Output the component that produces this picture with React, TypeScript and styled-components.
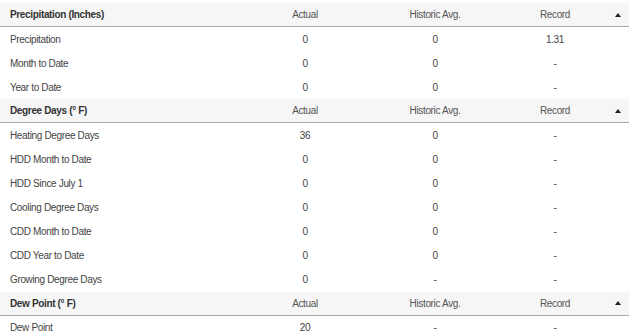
import styled, { createGlobalStyle } from "styled-components";

type Row = { label: string; actual: string; avg: string; record: string };
type Section = { title: string; rows: Row[] };

const sections: Section[] = [
	{
		title: "Precipitation (Inches)",
		rows: [
			{ label: "Precipitation", actual: "0", avg: "0", record: "1.31" },
			{ label: "Month to Date", actual: "0", avg: "0", record: "-" },
			{ label: "Year to Date", actual: "0", avg: "0", record: "-" },
		],
	},
	{
		title: "Degree Days (° F)",
		rows: [
			{ label: "Heating Degree Days", actual: "36", avg: "0", record: "-" },
			{ label: "HDD Month to Date", actual: "0", avg: "0", record: "-" },
			{ label: "HDD Since July 1", actual: "0", avg: "0", record: "-" },
			{ label: "Cooling Degree Days", actual: "0", avg: "0", record: "-" },
			{ label: "CDD Month to Date", actual: "0", avg: "0", record: "-" },
			{ label: "CDD Year to Date", actual: "0", avg: "0", record: "-" },
			{ label: "Growing Degree Days", actual: "0", avg: "-", record: "-" },
		],
	},
	{
		title: "Dew Point (° F)",
		rows: [{ label: "Dew Point", actual: "20", avg: "-", record: "-" }],
	},
];

const GlobalStyle = createGlobalStyle`
	body {
		margin: 0;
		background: #ffffff;
		font-family: "Liberation Sans", Arial, sans-serif;
		overflow: hidden;
	}
`;

const App = () => {
	return (
		<>
			<GlobalStyle />
			<StyledWrapper>
				{sections.map((section) => (
					<StyledSection key={section.title}>
						<StyledHeaderRow>
							<StyledTitle>{section.title}</StyledTitle>
							<StyledHeadCell>Actual</StyledHeadCell>
							<StyledHeadCell>Historic Avg.</StyledHeadCell>
							<StyledHeadCell>Record</StyledHeadCell>
							<StyledToggle>
								<StyledCaret />
							</StyledToggle>
						</StyledHeaderRow>
						{section.rows.map((row) => (
							<StyledRow key={row.label}>
								<StyledLabel>{row.label}</StyledLabel>
								<StyledValue>{row.actual}</StyledValue>
								<StyledValue>{row.avg}</StyledValue>
								<StyledValue>{row.record}</StyledValue>
								<span />
							</StyledRow>
						))}
					</StyledSection>
				))}
			</StyledWrapper>
		</>
	);
};

export default App;

const columns = "240px 130px 130px 110px 19px";

const StyledWrapper = styled.div`
	width: 629px;
	padding-top: 3px;
`;

const StyledSection = styled.section`
	display: flex;
	flex-direction: column;
`;

const StyledHeaderRow = styled.div`
	display: grid;
	grid-template-columns: ${columns};
	align-items: center;
	height: 23px;
	background: #f6f6f6;
	border-bottom: 1px solid #a9a9a9;
	font-size: 10px;
	letter-spacing: -0.35px;
`;

const StyledTitle = styled.div`
	padding-left: 10px;
	font-weight: bold;
	color: #333333;
`;

const StyledHeadCell = styled.div`
	text-align: center;
	color: #555555;
`;

const StyledToggle = styled.div`
	display: flex;
	justify-content: center;
	align-items: center;
`;

const StyledCaret = styled.span`
	width: 0;
	height: 0;
	border-left: 3.5px solid transparent;
	border-right: 3.5px solid transparent;
	border-bottom: 4px solid #222222;
	margin-left: -4px;
`;

const StyledRow = styled.div`
	display: grid;
	grid-template-columns: ${columns};
	align-items: center;
	height: 24.1px;
	font-size: 10px;
	letter-spacing: -0.35px;
	color: #444444;
`;

const StyledLabel = styled.div`
	padding-left: 10px;
`;

const StyledValue = styled.div`
	text-align: center;
`;
